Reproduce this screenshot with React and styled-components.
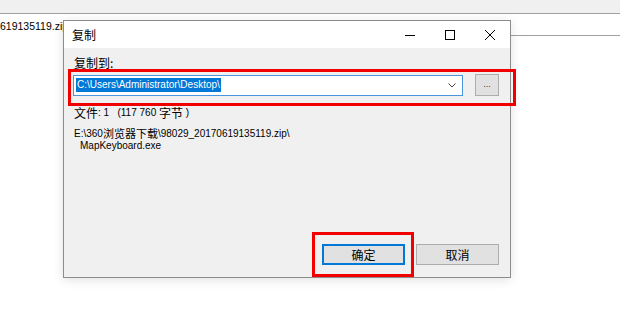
import React from 'react'
import styled, { createGlobalStyle } from 'styled-components'

const GlobalStyle = createGlobalStyle`
  html, body {
    margin: 0;
    padding: 0;
    background: #fff;
    overflow: hidden;
  }
  body {
    font-family: "Liberation Sans", "Noto Sans CJK SC", sans-serif;
    font-size: 10px;
    color: #000;
  }
`

const Desktop = styled.div`
  position: relative;
  width: 620px;
  height: 309px;
  overflow: hidden;
  background: #fff;
`

const TopStrip = styled.div`
  height: 13px;
  background: #f0f0f0;
  border-bottom: 1px solid #a0a0a0;
`

const AddressRow = styled.div`
  display: flex;
  align-items: flex-end;
  height: 22px;
`

const FileName = styled.div`
  flex: 0 0 auto;
  font-size: 10.5px;
  line-height: 14px;
  padding-bottom: 3px;
`

const Rule = styled.div`
  flex: 1;
  border-bottom: 1px solid #a0a0a0;
`

const Cjk = styled.span`
  font-family: "Noto Sans CJK SC", sans-serif;
  font-size: ${p => p.$size || 12}px;
`

const Dialog = styled.div`
  position: absolute;
  left: 63px;
  top: 20px;
  width: 448px;
  height: 258px;
  box-sizing: border-box;
  border: 1px solid #8c8c8c;
  display: flex;
  flex-direction: column;
  box-shadow: 0 2px 10px rgba(0, 0, 0, 0.12);
`

const TitleBar = styled.div`
  height: 27px;
  background: #fff;
  display: flex;
  align-items: center;
`

const Title = styled.div`
  flex: 1;
  padding-left: 8px;
  font-family: "Noto Sans CJK SC", sans-serif;
  font-size: 12px;
`

const CaptionButton = styled.div`
  width: 40px;
  height: 27px;
  display: flex;
  align-items: center;
  justify-content: center;
`

const Body = styled.div`
  flex: 1;
  background: #f0f0f0;
  display: flex;
  flex-direction: column;
  padding: 8px 11px 12px 10px;
`

const Label = styled.div`
  line-height: 14px;
  font-family: "Noto Sans CJK SC", sans-serif;
  font-size: 12px;
`

const ComboRow = styled.div`
  display: flex;
  align-items: center;
  height: 22px;
  margin-top: 4px;
  margin-left: -1px;
`

const Combo = styled.div`
  width: 390px;
  height: 21px;
  box-sizing: border-box;
  border: 1px solid #4a95e0;
  background: #fff;
  display: flex;
  align-items: center;
  padding: 0 6px 0 2px;
`

const Selected = styled.span`
  background: #0078d7;
  color: #fff;
  font-size: 10px;
  line-height: 14px;
  padding: 0 1px;
`

const Chevron = styled.svg`
  margin-left: auto;
`

const BrowseButton = styled.div`
  width: 24px;
  height: 22px;
  box-sizing: border-box;
  margin-left: 12px;
  background: #e1e1e1;
  border: 1px solid #adadad;
  display: flex;
  align-items: center;
  justify-content: center;
  font-size: 9px;
  color: #333;
  padding-bottom: 2px;
`

const Info = styled.div`
  margin-top: 9px;
  height: 14px;
  display: flex;
  align-items: center;
  white-space: pre;
`

const PathBlock = styled.div`
  margin-top: 8px;
  display: flex;
  flex-direction: column;
`

const PathLine = styled.div`
  height: 12px;
  display: flex;
  align-items: center;
  white-space: pre;
  padding-left: ${p => (p.$indent ? '6px' : '0')};
`

const ButtonRow = styled.div`
  margin-top: auto;
  display: flex;
  justify-content: flex-end;
  gap: 11px;
`

const Button = styled.div`
  width: 83px;
  height: 21px;
  box-sizing: border-box;
  background: #e1e1e1;
  border: ${p => (p.$default ? '2px solid #0078d7' : '1px solid #adadad')};
  display: flex;
  align-items: center;
  justify-content: center;
  font-family: "Noto Sans CJK SC", sans-serif;
  font-size: 12px;
`

const Highlight = styled.div`
  position: absolute;
  box-sizing: border-box;
  border: 3px solid #f20000;
  pointer-events: none;
`

function App() {
  return (
    <Desktop>
      <GlobalStyle />
      <TopStrip />
      <AddressRow>
        <FileName>619135119.zip</FileName>
        <Rule />
      </AddressRow>

      <Dialog>
        <TitleBar>
          <Title>复制</Title>
          <CaptionButton>
            <svg width="10" height="10" viewBox="0 0 10 10">
              <path d="M0 5.5h10" stroke="#000" strokeWidth="1" />
            </svg>
          </CaptionButton>
          <CaptionButton>
            <svg width="10" height="10" viewBox="0 0 10 10">
              <rect x="0.5" y="0.5" width="9" height="9" fill="none" stroke="#000" strokeWidth="1" />
            </svg>
          </CaptionButton>
          <CaptionButton>
            <svg width="10" height="10" viewBox="0 0 10 10">
              <path d="M0 0L10 10M10 0L0 10" stroke="#000" strokeWidth="1" />
            </svg>
          </CaptionButton>
        </TitleBar>
        <Body>
          <Label>复制到:</Label>
          <ComboRow>
            <Combo>
              <Selected>C:\Users\Administrator\Desktop\</Selected>
              <Chevron width="8" height="5" viewBox="0 0 8 5">
                <path d="M0.5 0.5L4 4L7.5 0.5" fill="none" stroke="#444" strokeWidth="1" />
              </Chevron>
            </Combo>
            <BrowseButton>...</BrowseButton>
          </ComboRow>
          <Info>
            <Cjk>文件</Cjk>: 1   (117 760 <Cjk>字节</Cjk> )
          </Info>
          <PathBlock>
            <PathLine>
              E:\360<Cjk $size={11}>浏览器下载</Cjk>\98029_20170619135119.zip\
            </PathLine>
            <PathLine $indent>MapKeyboard.exe</PathLine>
          </PathBlock>
          <ButtonRow>
            <Button $default>确定</Button>
            <Button>取消</Button>
          </ButtonRow>
        </Body>
      </Dialog>

      <Highlight style={{ left: 68, top: 69, width: 448, height: 37 }} />
      <Highlight style={{ left: 312, top: 232, width: 102, height: 45 }} />
    </Desktop>
  )
}

export default App
